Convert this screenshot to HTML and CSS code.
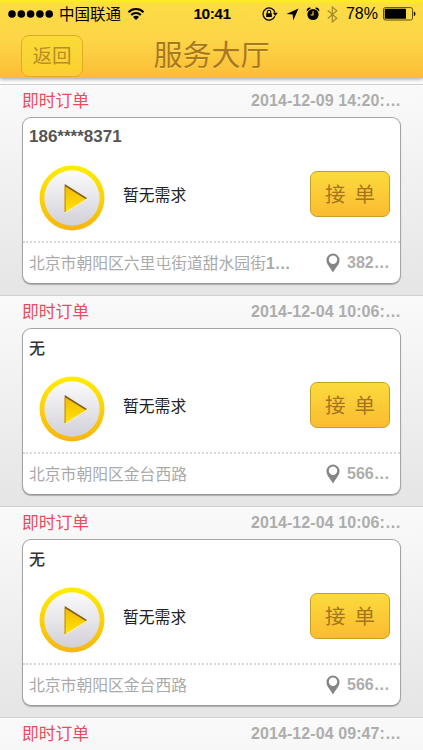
FILE: index.html
```html
<!DOCTYPE html>
<html lang="zh-CN">
<head>
<meta charset="utf-8">
<title>服务大厅</title>
<link rel="stylesheet" href="styles.css">
</head>
<body>
<svg class="defs" width="0" height="0" aria-hidden="true">
  <defs>
    <linearGradient id="ring" x1="0" y1="0" x2="0" y2="1"><stop offset="0" stop-color="#ffed00"/><stop offset="1" stop-color="#f7b510"/></linearGradient>
    <linearGradient id="disc" x1="0" y1="0" x2="0" y2="1"><stop offset="0" stop-color="#fbfbfc"/><stop offset="1" stop-color="#d2d0d8"/></linearGradient>
    <linearGradient id="tri" x1="0" y1="0" x2="0" y2="1"><stop offset="0" stop-color="#f3b70a"/><stop offset="1" stop-color="#ffe500"/></linearGradient>
    <symbol id="play" viewBox="0 0 66 66">
      <circle cx="33" cy="33" r="32.5" fill="url(#ring)"/>
      <circle cx="33" cy="33" r="27.7" fill="url(#disc)"/>
      <path d="M26 19.5 48 33.5 26 47.5Z" fill="url(#tri)"/>
      <path d="M25.7 19 48 33 46.5 34 26.8 21.8V47H25.7Z" fill="#806319"/>
      <path d="M26.8 22V46.5L25.600 47.5V21.5Z" fill="#e8b30d"/>
      <path d="M26 47.8 47.5 34.3" stroke="#fff6b0" stroke-width=".8"/>
    </symbol>
    <symbol id="pin" viewBox="0 0 14 20">
      <path fill="#858585" fill-rule="evenodd" d="M7 .5A6.5 6.5 0 0 0 .5 7C.5 11.500 4.200 14.600 7 19.500 9.800 14.600 13.500 11.500 13.500 7A6.500 6.500 0 0 0 7 .5ZM7 2.600A4.200 4.200 0 1 1 7 11 4.200 4.200 0 0 1 7 2.600Z"/>
    </symbol>
  </defs>
</svg>
<header class="header">
  <div class="status">
    <div class="carrier">
      <svg width="46" height="10" viewBox="0 0 46 10"><circle cx="4" cy="5" r="3.800"/><circle cx="13.300" cy="5" r="3.800"/><circle cx="22.600" cy="5" r="3.800"/><circle cx="31.900" cy="5" r="3.800"/><circle cx="41.200" cy="5" r="3.800"/></svg>
      <span class="carrier-name">中国联通</span>
      <svg class="wifi" width="18" height="14" viewBox="0 0 18 14"><path d="M1.500 5.200a10.500 10.500 0 0 1 15 0M4.200 8a6.700 6.700 0 0 1 9.600 0" fill="none" stroke="#000" stroke-width="2.100"/><path d="m6 10 3 3 3-3a4.200 4.200 0 0 0-6 0Z"/></svg>
    </div>
    <span class="clock">10:41</span>
    <div class="indicators">
      <svg width="16" height="14" viewBox="0 0 16 14"><path d="M12.800 9.200A6.100 6.100 0 1 1 13 5.500" fill="none" stroke="#000" stroke-width="1.200"/><path d="M10.800 5.800h5L13.300 9ZM4.200 6.300h5.600V10H4.200Z"/><path d="M5.300 6.500V5a1.700 1.700 0 0 1 3.400 0v1.500" fill="none" stroke="#000" stroke-width="1.100"/></svg>
      <svg class="arrow" width="13" height="13" viewBox="0 0 13 13"><path d="M12.500.5 7.200 12.500 6.700 6.500.5 6.100Z"/></svg>
      <svg class="alarm" width="14" height="14" viewBox="0 0 14 14"><circle cx="7" cy="7.500" r="5.600"/><path d="M.8 4.500A3 3 0 0 1 5 .9ZM13.200 4.500A3 3 0 0 0 9 .9Z"/><path d="M7 4.200V8H4.500" fill="none" stroke="#fcd63b" stroke-width="1.100"/></svg>
      <svg class="bluetooth" width="11" height="17" viewBox="0 0 11 17"><path d="m.8 4.500 9 7.700-4.500 3.800V1l4.500 3.700-9 7.800" fill="none" stroke="#a58a2a" stroke-width="1.200"/></svg>
      <span class="percent">78%</span>
      <svg width="33" height="14" viewBox="0 0 33 14"><rect x=".5" y=".6" width="29" height="12.400" rx="1.800" fill="none" stroke="#4a3d08" stroke-width=".9"/><rect x="1.700" y="1.800" width="21.300" height="10" rx=".6"/><path d="M30.800 4.500c2.200.6 2.200 4 0 4.600Z"/></svg>
    </div>
  </div>
  <div class="nav">
    <button class="back">返回</button>
    <h1 class="title">服务大厅</h1>
  </div>
</header>
<main class="orders">
  <section class="order">
    <div class="order-head"><span class="kind">即时订单</span><time class="time">2014-12-09 14:20:…</time></div>
    <article class="card">
      <div class="caller">186****8371</div>
      <div class="request"><svg class="play"><use href="#play"/></svg><span class="need">暂无需求</span><button class="accept"><span>接</span><span>单</span></button></div>
      <div class="place"><span class="address">北京市朝阳区六里屯街道甜水园街<b>1…</b></span><svg class="pin"><use href="#pin"/></svg><span class="distance">382…</span></div>
    </article>
  </section>
  <section class="order">
    <div class="order-head"><span class="kind">即时订单</span><time class="time">2014-12-04 10:06:…</time></div>
    <article class="card">
      <div class="caller unnamed">无</div>
      <div class="request"><svg class="play"><use href="#play"/></svg><span class="need">暂无需求</span><button class="accept"><span>接</span><span>单</span></button></div>
      <div class="place"><span class="address">北京市朝阳区金台西路</span><svg class="pin"><use href="#pin"/></svg><span class="distance">566…</span></div>
    </article>
  </section>
  <section class="order">
    <div class="order-head"><span class="kind">即时订单</span><time class="time">2014-12-04 10:06:…</time></div>
    <article class="card">
      <div class="caller unnamed">无</div>
      <div class="request"><svg class="play"><use href="#play"/></svg><span class="need">暂无需求</span><button class="accept"><span>接</span><span>单</span></button></div>
      <div class="place"><span class="address">北京市朝阳区金台西路</span><svg class="pin"><use href="#pin"/></svg><span class="distance">566…</span></div>
    </article>
  </section>
  <section class="order partial">
    <div class="order-head"><span class="kind">即时订单</span><time class="time">2014-12-04 09:47:…</time></div>
  </section>
</main>
</body>
</html>
```
FILE: styles.css
```css
* { box-sizing: border-box; }
html, body { height: 100%; }
body {
  margin: 0;
  display: flex;
  flex-direction: column;
  overflow: hidden;
  background: #fdfdfd;
  font-family: "Liberation Sans", "Noto Sans CJK SC", sans-serif;
}
svg { display: block; flex: none; }
.defs { position: absolute; }
button { margin: 0; padding: 0; font-family: inherit; }

.header {
  flex: none;
  height: 78px;
  background: linear-gradient(#fdee1e 0, #fcdc45 5px, #fdd548 40px, #fcbd34 100%);
  box-shadow: 0 1px 4px rgba(0, 0, 0, .4);
  z-index: 1;
}
.status {
  height: 28px;
  display: grid;
  grid-template-columns: 1fr auto 1fr;
  align-items: center;
  padding: 0 7px 0 8px;
  color: #000;
}
.carrier, .indicators { display: flex; align-items: center; }
.carrier-name { margin-left: 5px; padding-top: 1px; font-size: 15.5px; line-height: 27px; }
.wifi { margin-left: 6px; }
.clock { font-size: 15.5px; font-weight: bold; letter-spacing: -.5px; }
.indicators { justify-content: flex-end; }
.arrow { margin-left: 8px; }
.alarm { margin-left: 7px; }
.bluetooth { margin-left: 7px; }
.percent { margin: 0 5px 0 8px; font-size: 16px; }

.nav {
  height: 50px;
  display: grid;
  grid-template-columns: 62px 1fr 62px;
  padding: 0 21px;
}
.back {
  width: 62px;
  height: 42px;
  margin-top: 7px;
  border: 1px solid #dfad20;
  border-radius: 8px;
  background: linear-gradient(#fadb38, #fbd02f);
  color: #b88d29;
  font-size: 19.5px;
  line-height: 40px;
}
.title {
  margin: 0;
  color: #a9781f;
  font-size: 29px;
  font-weight: normal;
  line-height: 56px;
  text-align: center;
  text-shadow: 0 1px 0 rgba(255, 235, 120, .6);
}

.orders { flex: none; margin-top: 6px; }
.order {
  height: 211px;
  padding: 0 22px;
  border-top: 1px solid #d0d0d0;
  background: linear-gradient(#fafafa, #e5e5e5) 0 0 / 100% 210px no-repeat;
}
.partial { height: 33px; }
.order-head {
  height: 32px;
  display: flex;
  justify-content: space-between;
  line-height: 32px;
}
.kind { padding-top: 1px; line-height: 31px; color: #ec4a60; font-size: 16.8px; }
.time { color: #adadad; font-size: 16px; font-weight: bold; letter-spacing: .08px; }

.card {
  width: 379px;
  height: 167px;
  border: 1px solid #a5a5a5;
  border-bottom-color: #999;
  border-radius: 9px;
  background: #fff;
  box-shadow: 0 1px 1px rgba(0, 0, 0, .25);
}
.caller {
  height: 38px;
  padding-left: 6px;
  color: #555;
  font-size: 17px;
  font-weight: bold;
  line-height: 37px;
}
.unnamed { padding-top: 1px; color: #333; font-size: 16px; font-weight: 500; }
.request {
  height: 87px;
  display: flex;
  align-items: center;
  padding: 0 10px 0 16px;
  border-bottom: 2px dotted #d8d8d8;
}
.play { width: 66px; height: 66px; margin-bottom: 1px; }
.need { margin: 0 0 6px 18px; color: #222; font-size: 15.8px; line-height: 24px; }
.accept {
  width: 80px;
  height: 46px;
  margin: -10px 0 0 auto;
  display: flex;
  justify-content: center;
  gap: 9px;
  border: 1px solid #c9a025;
  border-radius: 7px;
  background: linear-gradient(#fbdb3c, #fbbb31);
  color: #a5751c;
  font-size: 20.5px;
  line-height: 45px;
}
.place {
  height: 40px;
  display: flex;
  align-items: center;
  padding-left: 6px;
  color: #aaa;
  font-size: 15.8px;
}
.address { flex: none; width: 297px; padding-top: 2px; line-height: 38px; }
.pin { width: 14px; height: 20px; }
.distance { margin-left: 7px; color: #adadad; font-size: 16px; font-weight: bold; line-height: 40px; }
```
